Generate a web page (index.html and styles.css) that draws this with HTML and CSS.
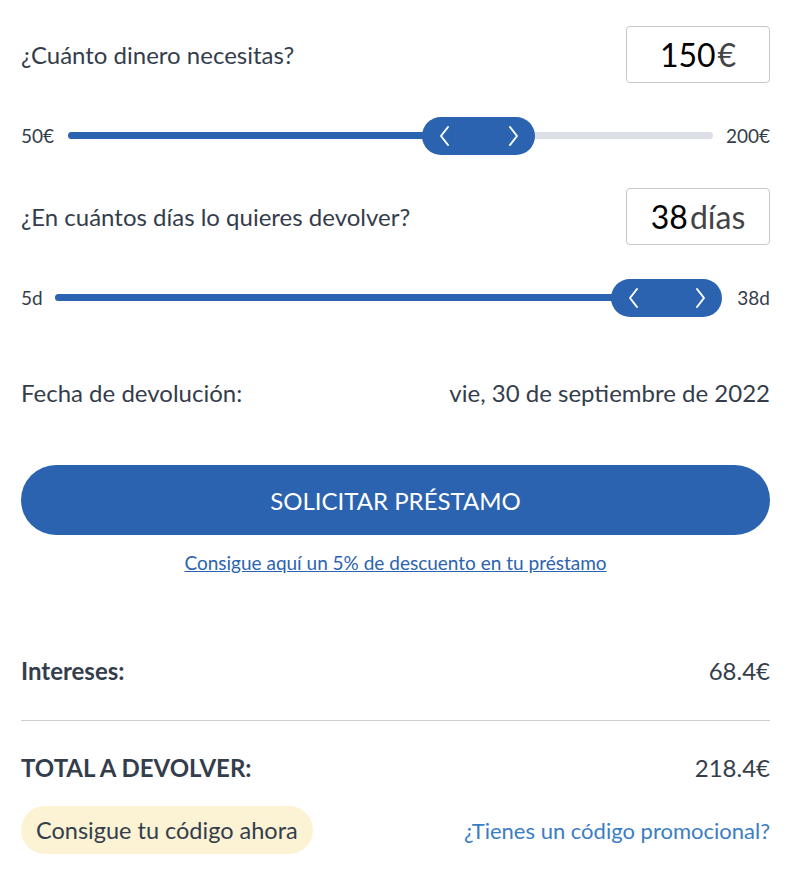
FILE: index.html
```html
<!DOCTYPE html>
<html lang="es">
<head>
  <meta charset="UTF-8">
  <meta name="viewport" content="width=device-width, initial-scale=1.0">
  <title>Simulador de préstamo</title>
  <link rel="stylesheet" href="styles.css">
</head>
<body>
  <article class="calculator">
    <section class="questionRow">
      <p class="question">¿Cuánto dinero necesitas?</p>
      <div class="valueBox"><span class="valueNum">150</span><span class="valueUnit">€</span></div>
    </section>

    <section class="sliderRow">
      <span class="sliderLimit limitMin1">50€</span>
      <div class="sliderTrack">
        <div class="sliderFill" style="width: 58%"></div>
        <div class="sliderThumb">
          <svg viewBox="0 0 12 22" width="12" height="22"><path d="M10 2 L3 11 L10 20" fill="none" stroke="#fff" stroke-width="2" stroke-linecap="round" stroke-linejoin="round"/></svg>
          <svg viewBox="0 0 12 22" width="12" height="22"><path d="M2 2 L9 11 L2 20" fill="none" stroke="#fff" stroke-width="2" stroke-linecap="round" stroke-linejoin="round"/></svg>
        </div>
      </div>
      <span class="sliderLimit">200€</span>
    </section>

    <section class="questionRow second">
      <p class="question">¿En cuántos días lo quieres devolver?</p>
      <div class="valueBox"><span class="valueNum">38</span><span class="valueUnit">días</span></div>
    </section>

    <section class="sliderRow days">
      <span class="sliderLimit limitMin2">5d</span>
      <div class="sliderTrack">
        <div class="sliderFill" style="width: 100%"></div>
        <div class="sliderThumb thumbEnd">
          <svg viewBox="0 0 12 22" width="12" height="22"><path d="M10 2 L3 11 L10 20" fill="none" stroke="#fff" stroke-width="2" stroke-linecap="round" stroke-linejoin="round"/></svg>
          <svg viewBox="0 0 12 22" width="12" height="22"><path d="M2 2 L9 11 L2 20" fill="none" stroke="#fff" stroke-width="2" stroke-linecap="round" stroke-linejoin="round"/></svg>
        </div>
      </div>
      <span class="sliderLimit">38d</span>
    </section>

    <section class="infoRow dateRow">
      <span>Fecha de devolución:</span>
      <span>vie, 30 de septiembre de 2022</span>
    </section>

    <button class="mainBtn">SOLICITAR PRÉSTAMO</button>
    <p class="discountLink"><a href="#">Consigue aquí un 5% de descuento en tu préstamo</a></p>

    <section class="infoRow summaryRow">
      <span class="bold">Intereses:</span>
      <span>68.4€</span>
    </section>
    <hr class="divider">
    <section class="infoRow summaryRow total">
      <span class="bold">TOTAL A DEVOLVER:</span>
      <span>218.4€</span>
    </section>

    <section class="promoRow">
      <span class="promoBadge">Consigue tu código ahora</span>
      <a href="#" class="promoLink">¿Tienes un código promocional?</a>
    </section>
  </article>
</body>
</html>
```

FILE: styles.css
```css
body {
  margin: 0;
  font-family: Lato, "Open Sans", sans-serif;
  color: #343d4b;
  background: #fff;
}

p {
  margin: 0;
}

.calculator {
  padding: 26px 24px 0 21px;
}

.questionRow {
  display: flex;
  justify-content: space-between;
  align-items: center;
}

.question {
  font-size: 24px;
}

.valueBox {
  box-sizing: border-box;
  width: 144px;
  height: 57px;
  border: 1px solid #c8c8c8;
  border-radius: 4px;
  display: flex;
  justify-content: center;
  align-items: center;
  gap: 2px;
  font-size: 32px;
}

.valueNum {
  color: #000;
}

.valueUnit {
  color: #444;
}

.sliderRow {
  display: flex;
  align-items: center;
  height: 38px;
  margin-top: 33px;
  font-size: 19px;
}

.sliderLimit {
  flex-shrink: 0;
}

.limitMin1 {
  margin-right: 14px;
}

.limitMin2 {
  margin-right: 12px;
}

.sliderTrack {
  position: relative;
  flex: 1;
  height: 7px;
  border-radius: 4px;
  background: #dcdfe5;
  margin-right: 13px;
}

.days .sliderTrack {
  margin-right: 28px;
}

.sliderFill {
  height: 100%;
  border-radius: 4px;
  background: #2b63b1;
}

.sliderThumb {
  position: absolute;
  top: -15px;
  left: 354px;
  box-sizing: border-box;
  width: 113px;
  height: 38px;
  border-radius: 19px;
  background: #2b63b1;
  display: flex;
  justify-content: space-between;
  align-items: center;
  padding: 0 15px 0 16px;
}

.thumbEnd {
  left: auto;
  right: -13px;
  width: 111px;
}

.questionRow.second {
  margin-top: 34px;
}

.infoRow {
  display: flex;
  justify-content: space-between;
  align-items: center;
  font-size: 24px;
}

.dateRow {
  margin-top: 62px;
}

.mainBtn {
  display: block;
  width: 100%;
  height: 70px;
  margin-top: 58px;
  border: 0;
  border-radius: 35px;
  background: #2b63b1;
  color: #fff;
  font-family: inherit;
  font-size: 24px;
  cursor: pointer;
}

.discountLink {
  margin-top: 16px;
  text-align: center;
  font-size: 19px;
}

.discountLink a {
  color: #2b63b1;
}

.summaryRow {
  margin-top: 82px;
}

.bold {
  font-weight: 700;
}

.divider {
  margin: 35px 0 0;
  border: 0;
  border-top: 1px solid #cfcfcf;
}

.summaryRow.total {
  margin-top: 32px;
}

.promoRow {
  display: flex;
  justify-content: space-between;
  align-items: center;
  margin-top: 24px;
  font-size: 23.5px;
}

.promoBadge {
  background: #fcf3d4;
  border-radius: 25px;
  padding: 10px 15px;
}

.promoLink {
  color: #3b7dc2;
  text-decoration: none;
  font-size: 22px;
}
```
